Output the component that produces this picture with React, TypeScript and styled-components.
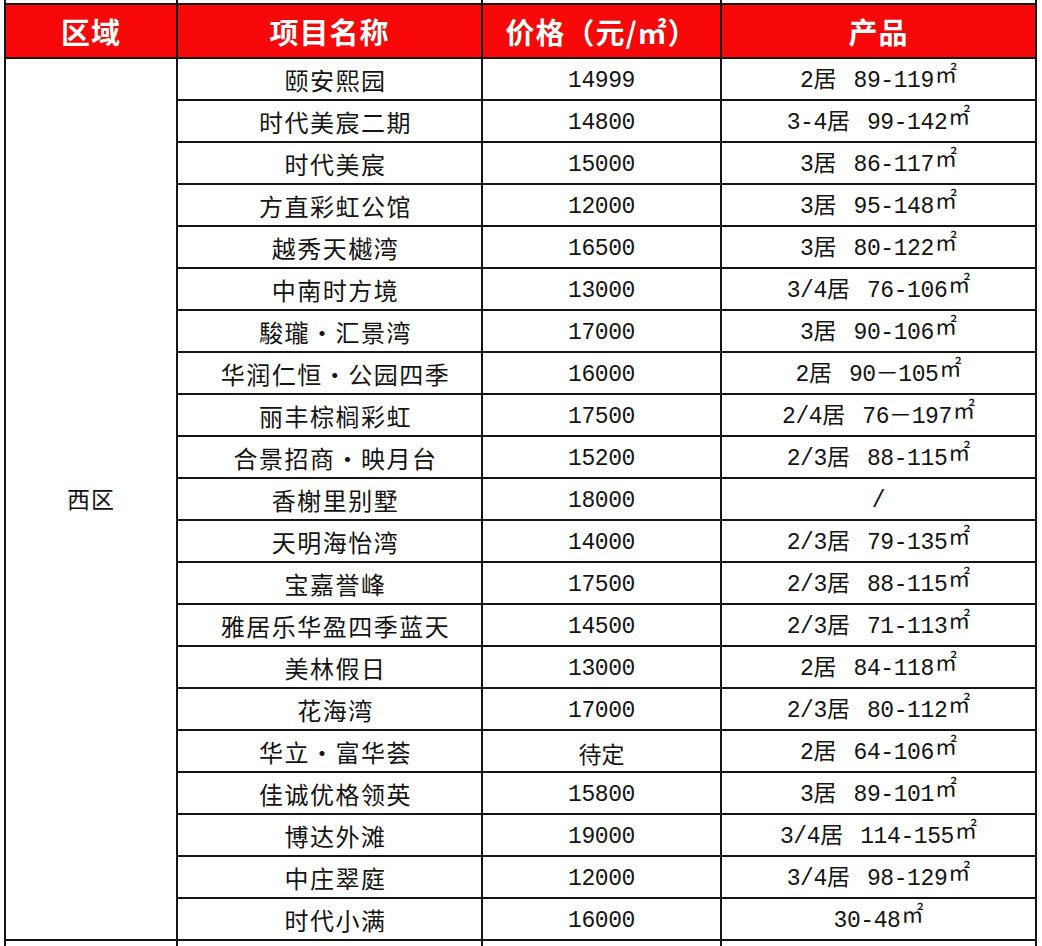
import React from "react";
import styled, { createGlobalStyle } from "styled-components";

const Global = createGlobalStyle`
  html, body {
    margin: 0;
    padding: 0;
    background: #ffffff;
    overflow: hidden;
  }
  body {
    font-family: "Noto Sans CJK SC", "Noto Sans", sans-serif;
  }
`;

const Page = styled.div`
  width: 1042px;
  height: 946px;
  overflow: hidden;
  padding-left: 4px;
  box-sizing: border-box;
`;

const Sheet = styled.div`
  display: grid;
  width: 1033px;
  grid-template-columns: 170px 303px 237px 313px;
  grid-template-rows: 3px 52px repeat(21, 40px) 12px;
  gap: 2px;
  padding: 0 2px;
  box-sizing: border-box;
  background: #161616;
`;

const Stub = styled.div`
  background: #ffffff;
`;

const HeadCell = styled.div`
  background: #f80808;
  color: #ffffff;
  display: flex;
  align-items: center;
  justify-content: center;
  font-family: "Noto Sans CJK SC", sans-serif;
  font-weight: 700;
  font-size: 29px;
  letter-spacing: 1px;
  text-shadow: 0 0 1px rgba(90, 0, 0, 0.6);
`;

const RegionCell = styled.div<{ $span: number }>`
  grid-row: span ${(p) => p.$span};
  background: #ffffff;
  display: flex;
  align-items: center;
  justify-content: center;
  font-family: "Noto Sans CJK SC", sans-serif;
  font-size: 23px;
  letter-spacing: 1px;
  color: #111111;
  padding-bottom: 2px;
`;

const Cell = styled.div<{ $kind: "name" | "price" | "product" }>`
  background: #ffffff;
  display: flex;
  align-items: center;
  justify-content: center;
  color: #141414;
  line-height: 28px;
  padding-top: ${(p) => (p.$kind === "name" ? "2px" : "4px")};
  font-family: ${(p) =>
    p.$kind === "name"
      ? `"Noto Sans CJK SC", sans-serif`
      : `"Liberation Mono", "Noto Sans CJK SC", monospace`};
  font-size: ${(p) => (p.$kind === "name" ? "24px" : "23px")};
  letter-spacing: ${(p) => (p.$kind === "name" ? "1.5px" : "-0.4px")};
  padding-left: ${(p) => (p.$kind === "name" ? "12px" : "0")};
`;

const Text = styled.span`
  white-space: pre;
`;

const Room = styled.span`
  font-family: "Noto Sans CJK SC", sans-serif;
  font-size: 23px;
  line-height: 0;
  letter-spacing: 0;
`;

const Gap = styled.span`
  display: inline-block;
  width: 17px;
`;

const Unit = styled.span`
  font-family: "Noto Sans CJK SC", sans-serif;
  font-size: 22px;
  line-height: 0;
  letter-spacing: 0;
  position: relative;
  top: -5px;
  margin-left: 1px;
`;

type Row = { name: string; price: string; rooms?: string; area?: string; plain?: string };

const rows: Row[] = [
  { name: "颐安熙园", price: "14999", rooms: "2", area: "89-119" },
  { name: "时代美宸二期", price: "14800", rooms: "3-4", area: "99-142" },
  { name: "时代美宸", price: "15000", rooms: "3", area: "86-117" },
  { name: "方直彩虹公馆", price: "12000", rooms: "3", area: "95-148" },
  { name: "越秀天樾湾", price: "16500", rooms: "3", area: "80-122" },
  { name: "中南时方境", price: "13000", rooms: "3/4", area: "76-106" },
  { name: "駿瓏·汇景湾", price: "17000", rooms: "3", area: "90-106" },
  { name: "华润仁恒·公园四季", price: "16000", rooms: "2", area: "90－105" },
  { name: "丽丰棕榈彩虹", price: "17500", rooms: "2/4", area: "76－197" },
  { name: "合景招商·映月台", price: "15200", rooms: "2/3", area: "88-115" },
  { name: "香榭里别墅", price: "18000", plain: "/" },
  { name: "天明海怡湾", price: "14000", rooms: "2/3", area: "79-135" },
  { name: "宝嘉誉峰", price: "17500", rooms: "2/3", area: "88-115" },
  { name: "雅居乐华盈四季蓝天", price: "14500", rooms: "2/3", area: "71-113" },
  { name: "美林假日", price: "13000", rooms: "2", area: "84-118" },
  { name: "花海湾", price: "17000", rooms: "2/3", area: "80-112" },
  { name: "华立·富华荟", price: "待定", rooms: "2", area: "64-106" },
  { name: "佳诚优格领英", price: "15800", rooms: "3", area: "89-101" },
  { name: "博达外滩", price: "19000", rooms: "3/4", area: "114-155" },
  { name: "中庄翠庭", price: "12000", rooms: "3/4", area: "98-129" },
  { name: "时代小满", price: "16000", area: "30-48" },
];

function Product({ row }: { row: Row }) {
  if (row.plain) return <Text>{row.plain}</Text>;
  return (
    <Text>
      {row.rooms !== undefined && (
        <>
          {row.rooms}
          <Room>居</Room>
          <Gap />
        </>
      )}
      {row.area}
      <Unit>㎡</Unit>
    </Text>
  );
}

export default function App() {
  return (
    <Page>
      <Global />
      <Sheet>
        <Stub />
        <Stub />
        <Stub />
        <Stub />
        <HeadCell>区域</HeadCell>
        <HeadCell>项目名称</HeadCell>
        <HeadCell>价格（元/㎡）</HeadCell>
        <HeadCell>产品</HeadCell>
        {rows.map((r, i) => (
          <React.Fragment key={r.name}>
            {i === 0 && <RegionCell $span={rows.length}>西区</RegionCell>}
            <Cell $kind="name">{r.name}</Cell>
            <Cell $kind="price">
              {r.price === "待定" ? <Room>{r.price}</Room> : <Text>{r.price}</Text>}
            </Cell>
            <Cell $kind="product">
              <Product row={r} />
            </Cell>
          </React.Fragment>
        ))}
        <Stub />
        <Stub />
        <Stub />
        <Stub />
      </Sheet>
    </Page>
  );
}
